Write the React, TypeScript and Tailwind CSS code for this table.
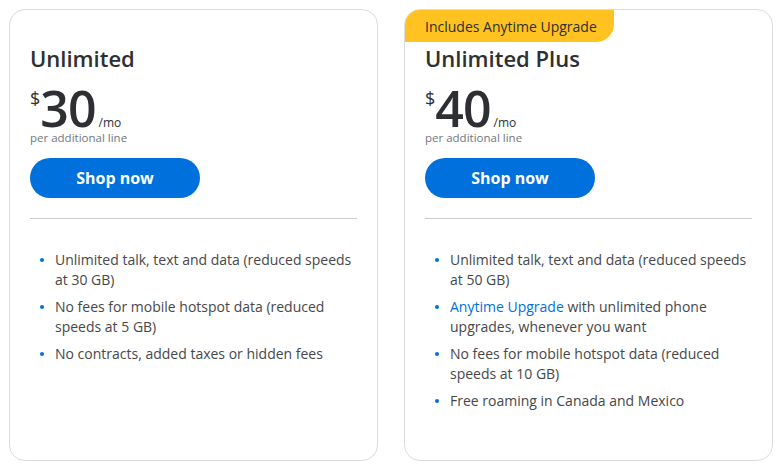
import React from 'react';

interface Plan {
  name: string;
  price: string;
  badge?: string;
  features: React.ReactNode[];
}

const plans: Plan[] = [
  {
    name: 'Unlimited',
    price: '30',
    features: [
      'Unlimited talk, text and data (reduced speeds at 30 GB)',
      'No fees for mobile hotspot data (reduced speeds at 5 GB)',
      'No contracts, added taxes or hidden fees',
    ],
  },
  {
    name: 'Unlimited Plus',
    price: '40',
    badge: 'Includes Anytime Upgrade',
    features: [
      'Unlimited talk, text and data (reduced speeds at 50 GB)',
      <>
        <span className="text-[#0071dc]">Anytime Upgrade</span> with unlimited phone upgrades, whenever you want
      </>,
      'No fees for mobile hotspot data (reduced speeds at 10 GB)',
      'Free roaming in Canada and Mexico',
    ],
  },
];

const PlanCard: React.FC<{ plan: Plan }> = ({ plan }) => {
  return (
    <div className="flex-1 h-[452px] border border-[#dadcdf] rounded-[16px] overflow-hidden bg-white">
      {/* Badge */}
      <div className="h-[32px]">
        {plan.badge && (
          <div className="inline-flex h-[32px] items-center bg-[#ffc220] pl-[20px] pr-[17px] rounded-br-[18px] text-[14px] text-[#2e2f32]">
            {plan.badge}
          </div>
        )}
      </div>

      <div className="px-[20px]">
        <h2 className="text-[22px] leading-[32px] text-[#2e2f32] font-semibold">{plan.name}</h2>

        {/* Prix */}
        <div className="mt-[12px] h-[44px] flex items-start text-[#2e2f32]">
          <span className="text-[18px] leading-[20px] mt-[2px]">$</span>
          <span className="text-[50px] leading-[44px] font-semibold tracking-[-1px]">{plan.price}</span>
          <span className="text-[12px] leading-[14px] mt-[30px] ml-[3px]">/mo</span>
        </div>
        <p className="text-[11.5px] leading-[14px] mt-[1px] text-[#74767c]">per additional line</p>

        <button className="mt-[13px] w-[170px] h-[40px] rounded-full bg-[#0071dc] text-white text-[16px] font-bold">
          Shop now
        </button>

        <div className="mt-[20px] border-t border-[#c9cacd]" />

        <ul className="mt-[31px] pl-[25px] flex flex-col gap-[7px]">
          {plan.features.map((f, i) => (
            <li key={i} className="relative text-[14px] leading-[20px] text-[#46474a]">
              <span className="absolute left-[-15px] top-[8px] w-[4px] h-[4px] rounded-full bg-[#0071dc]" />
              {f}
            </li>
          ))}
        </ul>
      </div>
    </div>
  );
};

export default function App() {
  return (
    <div className="w-[782px] h-[470px] bg-white p-[9px] flex gap-[26px]" style={{ fontFamily: '"Open Sans", sans-serif' }}>
      {plans.map((p) => (
        <PlanCard key={p.name} plan={p} />
      ))}
    </div>
  );
}
